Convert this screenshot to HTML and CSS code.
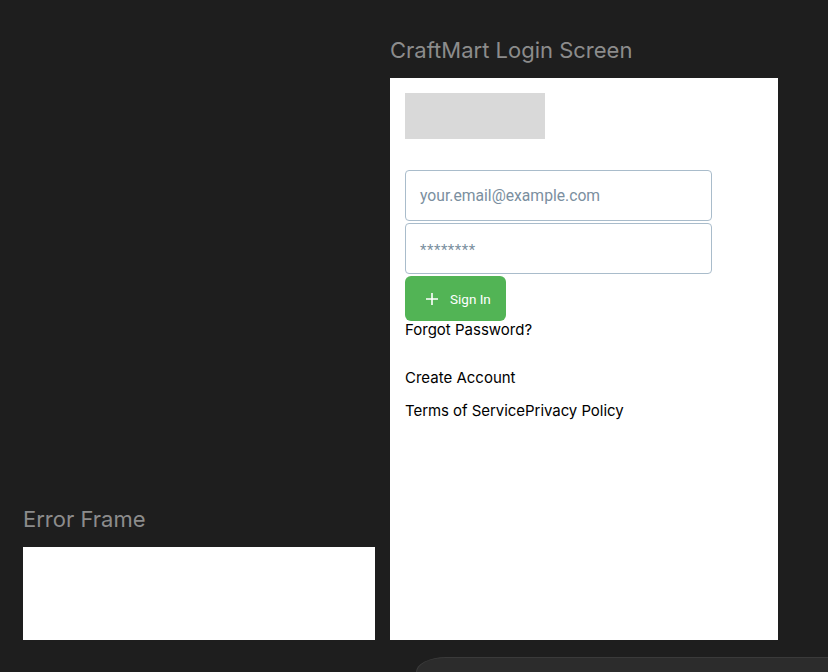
FILE: index.html
```html
<!DOCTYPE html>
<html>
<head>
<meta charset="utf-8">
<link rel="stylesheet" href="styles.css">
</head>
<body>
<div class="canvas">
  <div class="col col-left">
    <div class="frame-label">Error Frame</div>
    <div class="frame error-frame"></div>
  </div>
  <div class="col col-right">
    <div class="frame-label">CraftMart Login Screen</div>
    <div class="frame login-frame">
      <div class="logo"></div>
      <div class="field"><span class="ph">your.email@example.com</span></div>
      <div class="field"><span class="ph pw">********</span></div>
      <button class="btn">
        <svg class="plus" width="14" height="14" viewBox="0 0 14 14"><path d="M7 1v12M1 7h12" stroke="#fff" stroke-width="1.6" fill="none"/></svg>
        <span>Sign In</span>
      </button>
      <div class="link forgot">Forgot Password?</div>
      <div class="link create">Create Account</div>
      <div class="link terms"><span>Terms of Service</span><span>Privacy Policy</span></div>
    </div>
  </div>
</div>
<div class="toolbar"></div>
</body>
</html>
```
FILE: styles.css
```css
html, body {
  margin: 0;
  padding: 0;
  background: #1e1e1e;
  width: 828px;
  height: 672px;
  overflow: hidden;
  font-family: Inter, "Noto Sans", sans-serif;
}
.canvas {
  display: flex;
  align-items: flex-end;
  gap: 15px;
  padding-left: 23px;
  height: 640px;
}
.col {
  display: flex;
  flex-direction: column;
}
.frame-label {
  color: #8c8c8c;
  font-size: 22px;
  line-height: 26px;
  font-family: Inter, sans-serif;
}
.col-left .frame-label { margin-bottom: 15px; }
.col-right .frame-label { margin-bottom: 15px; }
.frame { background: #fff; }
.error-frame { width: 352px; height: 93px; }
.login-frame {
  width: 388px;
  height: 562px;
  box-sizing: border-box;
  padding: 15px;
  display: flex;
  flex-direction: column;
  align-items: flex-start;
}
.logo {
  width: 140px;
  height: 46px;
  background: #d9d9d9;
  margin-bottom: 31px;
}
.field {
  width: 307px;
  height: 51px;
  box-sizing: border-box;
  border: 1px solid #a9bccb;
  border-radius: 4px;
  display: flex;
  align-items: center;
  padding-left: 14px;
  margin-bottom: 2px;
}
.ph {
  font-family: Roboto, sans-serif;
  font-size: 15.7px;
  color: #7b8fa0;
}
.ph.pw { letter-spacing: 0.5px; padding-top: 2px; font-size: 15px; }
.btn {
  width: 101px;
  height: 45px;
  background: #52b455;
  border: none;
  border-radius: 6px;
  display: flex;
  align-items: center;
  padding: 0 0 0 20px;
  gap: 11px;
  color: #fff;
  font-family: Roboto, sans-serif;
  font-size: 13.5px;
  font-weight: 400;
}
.link {
  color: #000;
  font-size: 15px;
  line-height: 18px;
}
.create { margin-top: 30px; }
.terms { margin-top: 15px; letter-spacing: -0.05px; }
.toolbar {
  position: absolute;
  left: 416px;
  top: 657px;
  width: 412px;
  height: 15px;
  box-sizing: border-box;
  background: #2c2c2c;
  border-top: 1px solid #3a3a3a;
  border-left: 1px solid #3a3a3a;
  border-top-left-radius: 30px 15px;
}
```
